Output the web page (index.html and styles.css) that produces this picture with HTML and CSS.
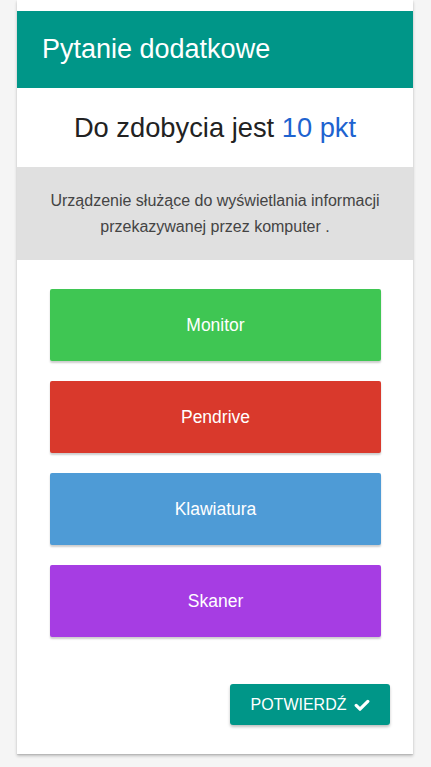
FILE: index.html
```html
<!DOCTYPE html>
<html lang="pl">
<head>
<meta charset="utf-8">
<title>Pytanie dodatkowe</title>
<link rel="stylesheet" href="styles.css">
</head>
<body>
<div class="card">
  <div class="card-header">Pytanie dodatkowe</div>
  <div class="points">Do zdobycia jest&nbsp;<span class="points-value">10 pkt</span></div>
  <div class="question">Urządzenie służące do wyświetlania informacji przekazywanej przez komputer .</div>
  <div class="answers">
    <button class="answer answer-green">Monitor</button>
    <button class="answer answer-red">Pendrive</button>
    <button class="answer answer-blue">Klawiatura</button>
    <button class="answer answer-purple">Skaner</button>
  </div>
  <div class="actions">
    <button class="confirm">POTWIERDŹ
      <svg class="check" viewBox="0 0 16 16" width="16" height="16" aria-hidden="true"><path d="M2.2 8.4 L6 12.2 L13.8 4.4" fill="none" stroke="#fff" stroke-width="3.2" stroke-linecap="round" stroke-linejoin="round"/></svg>
    </button>
  </div>
</div>
</body>
</html>
```
FILE: styles.css
```css
html, body {
  margin: 0;
  padding: 0;
}
body {
  background: #f5f5f5;
  font-family: "Liberation Sans", Arial, sans-serif;
  width: 431px;
  height: 767px;
  overflow: hidden;
}
.card {
  margin: 0 18px 0 17px;
  background: #fff;
  padding-top: 11px;
  padding-bottom: 29px;
  box-shadow: 0 2px 3px rgba(0,0,0,0.22), 0 1px 1px rgba(0,0,0,0.08);
}
.card-header {
  background: #009688;
  color: #fff;
  height: 77px;
  display: flex;
  align-items: center;
  padding-left: 25px;
  font-size: 27px;
  font-weight: 400;
}
.points {
  height: 79px;
  display: flex;
  align-items: center;
  justify-content: center;
  font-size: 27.3px;
  color: #222;
}
.points-value {
  color: #1e63d0;
}
.question {
  background: #e0e0e0;
  height: 93px;
  box-sizing: border-box;
  display: flex;
  align-items: center;
  justify-content: center;
  text-align: center;
  padding: 0 30px;
  font-size: 16px;
  line-height: 26px;
  color: #444;
}
.answers {
  display: flex;
  flex-direction: column;
  gap: 20px;
  padding: 29px 32px 0 33px;
}
.answer {
  height: 72px;
  border: none;
  border-radius: 2px;
  color: #fff;
  font-family: "Liberation Sans", Arial, sans-serif;
  font-size: 17.5px;
  box-shadow: 0 2px 2px rgba(0,0,0,0.2);
  cursor: pointer;
}
.answer-green { background: #3fc653; }
.answer-red { background: #d9392c; }
.answer-blue { background: #4e9bd6; }
.answer-purple { background: #a63de3; }
.actions {
  display: flex;
  justify-content: flex-end;
  padding: 47px 23px 0 0;
}
.confirm {
  width: 160px;
  height: 41px;
  border: none;
  border-radius: 3px;
  background: #009688;
  color: #fff;
  font-family: "Liberation Sans", Arial, sans-serif;
  font-size: 16px;
  display: flex;
  align-items: center;
  justify-content: center;
  gap: 7px;
  box-shadow: 0 2px 3px rgba(0,0,0,0.25);
}
.check {
  display: block;
}
```
